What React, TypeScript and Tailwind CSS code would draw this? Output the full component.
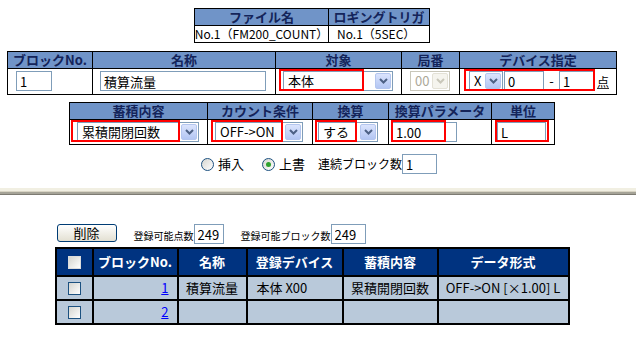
import React from 'react';

type Kids = { children?: React.ReactNode };

function Th({ children }: Kids) {
  return (
    <div className="bg-[#7094c8] text-[#14245a] text-[13px] font-bold leading-[16px] flex items-center justify-center whitespace-nowrap">
      {children}
    </div>
  );
}

function Chevron({ color }: { color: string }) {
  return (
    <svg width="9" height="6" viewBox="0 0 9 6">
      <path d="M1 1 L4.5 4.5 L8 1" fill="none" stroke={color} strokeWidth="2" />
    </svg>
  );
}

function Select({ className, text, disabled }: { className: string; text: string; disabled?: boolean }) {
  return (
    <div
      className={`flex shrink-0 h-[20px] p-px bg-white border ${
        disabled ? 'border-[#c9c7ba] text-[#aca899]' : 'border-[#7f9db9] text-black'
      } ${className}`}
    >
      <span className="flex-1 flex items-center pl-[3px] text-[13px] leading-[16px] whitespace-nowrap">{text}</span>
      {disabled ? (
        <span className="w-[16px] h-full border border-[#e3e1d6] bg-[#f5f4ee] rounded-[2px] flex items-center justify-center">
          <Chevron color="#c9c7ba" />
        </span>
      ) : (
        <span className="w-[16px] h-full border border-[#b4c6ef] bg-linear-to-b from-[#dbe4fd] to-[#b3c6f3] rounded-[2px] flex items-center justify-center">
          <Chevron color="#4d6185" />
        </span>
      )}
    </div>
  );
}

function Field({ className, value }: { className: string; value: string }) {
  return (
    <input
      readOnly
      value={value}
      className={`block shrink-0 h-[20px] border border-[#7f9db9] bg-white text-[13px] leading-[16px] pl-[3px] outline-none ${className}`}
    />
  );
}

function Mark({ className }: { className: string }) {
  return <div className={`absolute top-0 h-[22px] border-2 border-[#ff0000] pointer-events-none ${className}`} />;
}

function Radio({ checked }: { checked?: boolean }) {
  return (
    <span className="w-[13px] h-[13px] rounded-full border border-[#1c5180] bg-linear-to-br from-[#d6d6d0] to-white flex items-center justify-center">
      {checked && <span className="w-[5px] h-[5px] rounded-full bg-[#2ea12e]" />}
    </span>
  );
}

function Check({ head }: { head?: boolean }) {
  return (
    <span
      className={`block w-[13px] h-[13px] border bg-linear-to-br from-[#d4d4cf] to-white ${
        head ? 'border-[#dcdcdc]' : 'border-[#1c5180]'
      }`}
    />
  );
}

function Hd({ children }: Kids) {
  return (
    <div className="bg-[#003380] text-white text-[13px] font-bold flex items-center justify-center whitespace-nowrap">
      {children}
    </div>
  );
}

function Bd({ children, className = '' }: Kids & { className?: string }) {
  return <div className={`bg-[#b9c9da] text-[13px] flex items-center whitespace-nowrap ${className}`}>{children}</div>;
}

function Cell({ children, className = '' }: Kids & { className?: string }) {
  return <div className={`bg-white relative flex items-start pt-[2px] ${className}`}>{children}</div>;
}

export default function App() {
  return (
    <div className="w-[636px] h-[346px] bg-white overflow-hidden text-black [font-family:'Noto_Sans_CJK_JP','Noto_Sans',sans-serif]">
      <div className="w-[624px] flex flex-col items-center pt-[8px]">
        {/* file / trigger */}
        <div className="grid grid-cols-[133px_100px] grid-rows-[16px_16px] gap-px p-px bg-black">
          <Th>ファイル名</Th>
          <Th>ロギングトリガ</Th>
          <div className="bg-white text-[12px] leading-[16px] flex items-center justify-center whitespace-nowrap">
            No.1（FM200_COUNT）
          </div>
          <div className="bg-white text-[12px] leading-[16px] flex items-center pl-[8px] whitespace-nowrap">
            No.1（5SEC）
          </div>
        </div>

        {/* block settings */}
        <div className="mt-[8px] grid grid-cols-[84px_182px_125px_57px_156px] grid-rows-[16px_25px] gap-px p-px bg-black">
          <Th>ブロックNo.</Th>
          <Th>名称</Th>
          <Th>対象</Th>
          <Th>局番</Th>
          <Th>デバイス指定</Th>
          <Cell className="pl-[8px]">
            <Field className="w-[36px]" value="1" />
          </Cell>
          <Cell className="pl-[7px]">
            <Field className="w-[166px]" value="積算流量" />
          </Cell>
          <Cell className="pl-[7px]">
            <Select className="w-[110px]" text="本体" />
            <Mark className="left-[3px] w-[85px]" />
          </Cell>
          <Cell className="pl-[8px]">
            <Select className="w-[40px]" text="00" disabled />
          </Cell>
          <Cell className="pl-[9px]">
            <Select className="w-[34px]" text="X" />
            <Field className="w-[40px] ml-px" value="0" />
            <span className="w-[15px] text-[13px] leading-[20px] text-center">-</span>
            <Field className="w-[35px]" value="1" />
            <span className="ml-[3px] text-[12px] leading-[22px] underline decoration-[#333]">点</span>
            <Mark className="left-[4px] w-[131px]" />
          </Cell>
        </div>

        {/* accumulation */}
        <div className="mt-[7px] grid grid-cols-[137px_104px_75px_102px_62px] grid-rows-[16px_24px] gap-px p-px bg-black">
          <Th>蓄積内容</Th>
          <Th>カウント条件</Th>
          <Th>換算</Th>
          <Th>換算パラメータ</Th>
          <Th>単位</Th>
          <Cell className="pl-[7px]">
            <Select className="w-[122px]" text="累積開閉回数" />
            <Mark className="left-[1px] w-[109px]" />
          </Cell>
          <Cell className="pl-[7px]">
            <Select className="w-[88px]" text="OFF->ON" />
            <Mark className="left-[3px] w-[72px]" />
          </Cell>
          <Cell className="pl-[5px]">
            <Select className="w-[60px]" text="する" />
            <Mark className="left-[2px] w-[42px]" />
          </Cell>
          <Cell className="pl-[3px]">
            <Field className="w-[65px]" value="1.00" />
            <Mark className="left-[2px] w-[55px]" />
          </Cell>
          <Cell className="pl-[5px]">
            <Field className="w-[49px]" value="L" />
            <Mark className="left-[3px] w-[54px]" />
          </Cell>
        </div>

        {/* insert / overwrite */}
        <div className="mt-[9px] w-full h-[20px] pl-[201px] flex items-center">
          <Radio />
          <span className="ml-[4px] text-[13px]">挿入</span>
          <span className="ml-[18px]">
            <Radio checked />
          </span>
          <span className="ml-[4px] text-[13px]">上書</span>
          <span className="ml-[13px] text-[12px]">連続ブロック数</span>
          <Field className="w-[35px]" value="1" />
        </div>
      </div>

      {/* frame divider */}
      <div className="mt-[14px] w-full">
        <div className="h-[3px] bg-[#f1efe2]" />
        <div className="h-px bg-[#d8d4c4]" />
        <div className="h-[2px] bg-[#a5a397]" />
        <div className="h-px bg-[#7d7b72]" />
      </div>

      <div className="w-[624px] flex flex-col items-center">
        <div className="mt-[29px] w-[515px] flex items-start">
          <button className="ml-[2px] w-[60px] h-[18px] rounded-[3px] border border-[#003c74] bg-linear-to-b from-white to-[#e3e0d2] text-[13px] leading-[14px]">
            削除
          </button>
          <span className="ml-[17px] mt-[5px] text-[10px] leading-[14px]">登録可能点数</span>
          <Field className="w-[30px] h-[19px]" value="249" />
          <span className="ml-[17px] mt-[5px] text-[10px] leading-[14px]">登録可能ブロック数</span>
          <Field className="w-[35px] h-[19px]" value="249" />
        </div>

        <div className="mt-[3px] grid grid-cols-[35px_83px_67px_94px_93px_129px] grid-rows-[26px_22px_22px] gap-[2px] p-[2px] bg-black">
          <Hd>
            <Check head />
          </Hd>
          <Hd>ブロックNo.</Hd>
          <Hd>名称</Hd>
          <Hd>登録デバイス</Hd>
          <Hd>蓄積内容</Hd>
          <Hd>データ形式</Hd>

          <Bd className="justify-center">
            <Check />
          </Bd>
          <Bd className="justify-end pr-[8px]">
            <a className="text-[#0000ff] underline">1</a>
          </Bd>
          <Bd className="justify-center">積算流量</Bd>
          <Bd className="pl-[9px]">本体 X00</Bd>
          <Bd className="justify-center">累積開閉回数</Bd>
          <Bd className="justify-center">OFF-&gt;ON [×1.00] L</Bd>

          <Bd className="justify-center">
            <Check />
          </Bd>
          <Bd className="justify-end pr-[8px]">
            <a className="text-[#0000ff] underline">2</a>
          </Bd>
          <Bd />
          <Bd />
          <Bd />
          <Bd />
        </div>
      </div>
    </div>
  );
}
